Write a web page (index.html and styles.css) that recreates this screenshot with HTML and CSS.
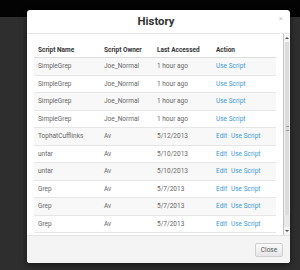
FILE: index.html
```html
<!DOCTYPE html>
<html>
<head>
<meta charset="utf-8">
<link rel="stylesheet" href="styles.css">
</head>
<body>
<div class="topbar"></div>
<div class="page"></div>
<div class="modal">
  <div class="modal-header">
    <h3 class="modal-title">History</h3>
    <span class="modal-x">×</span>
  </div>
  <div class="modal-body">
    <div class="body-content">
      <table class="table">
        <colgroup><col class="c1"><col class="c2"><col class="c3"><col class="c4"></colgroup>
        <thead>
          <tr><th>Script Name</th><th>Script Owner</th><th>Last Accessed</th><th>Action</th></tr>
        </thead>
        <tbody>
          <tr><td>SimpleGrep</td><td>Joe_Normal</td><td>1 hour ago</td><td><a class="link">Use Script</a></td></tr>
          <tr><td>SimpleGrep</td><td>Joe_Normal</td><td>1 hour ago</td><td><a class="link">Use Script</a></td></tr>
          <tr><td>SimpleGrep</td><td>Joe_Normal</td><td>1 hour ago</td><td><a class="link">Use Script</a></td></tr>
          <tr><td>SimpleGrep</td><td>Joe_Normal</td><td>1 hour ago</td><td><a class="link">Use Script</a></td></tr>
          <tr><td>TophatCufflinks</td><td>Av</td><td>5/12/2013</td><td><a class="link edit">Edit</a><a class="link">Use Script</a></td></tr>
          <tr><td>untar</td><td>Av</td><td>5/10/2013</td><td><a class="link edit">Edit</a><a class="link">Use Script</a></td></tr>
          <tr><td>untar</td><td>Av</td><td>5/10/2013</td><td><a class="link edit">Edit</a><a class="link">Use Script</a></td></tr>
          <tr><td>Grep</td><td>Av</td><td>5/7/2013</td><td><a class="link edit">Edit</a><a class="link">Use Script</a></td></tr>
          <tr><td>Grep</td><td>Av</td><td>5/7/2013</td><td><a class="link edit">Edit</a><a class="link">Use Script</a></td></tr>
          <tr><td>Grep</td><td>Av</td><td>5/7/2013</td><td><a class="link edit">Edit</a><a class="link">Use Script</a></td></tr>
        </tbody>
      </table>
    </div>
    <div class="sb">
      <div class="sb-btn"><span class="tri-up"></span></div>
      <div class="sb-track">
        <div class="sb-thumb"><span class="grip"></span></div>
      </div>
      <div class="sb-btn"><span class="tri-down"></span></div>
    </div>
  </div>
  <div class="modal-footer">
    <button class="btn">Close</button>
  </div>
</div>
</body>
</html>
```
FILE: styles.css
```css
html, body {
  margin: 0;
  padding: 0;
}
body {
  width: 300px;
  height: 270px;
  background: #2e2e2e;
  font-family: Roboto, "Liberation Sans", sans-serif;
  overflow: hidden;
  position: relative;
}
.topbar {
  height: 17px;
  background: #030303;
}
.page {
  height: 253px;
}
.modal {
  position: absolute;
  left: 27px;
  top: 10px;
  width: 263px;
  height: 253px;
  background: #fff;
  border-radius: 3px;
  box-shadow: 0 2px 6px rgba(0,0,0,0.5);
  display: flex;
  flex-direction: column;
  overflow: hidden;
}
.modal-header {
  height: 23px;
  flex: none;
  border-bottom: 1px solid #e8e8e8;
  display: flex;
  align-items: center;
  justify-content: center;
  position: relative;
}
.modal-title {
  margin: 0 5px 0 0;
  font-size: 11.4px;
  font-weight: 700;
  color: #333;
  line-height: 1;
}
.modal-x {
  position: absolute;
  right: 7px;
  top: 5px;
  font-size: 8px;
  color: #c8c8c8;
  line-height: 1;
}
.modal-body {
  height: 201px;
  flex: none;
  display: flex;
}
.body-content {
  flex: 1;
  overflow: hidden;
  padding: 8px 7px 0 7px;
}
.table {
  width: 242px;
  border-collapse: collapse;
  table-layout: fixed;
  font-size: 6.5px;
}
.c1 { width: 66px; }
.c2 { width: 53px; }
.c3 { width: 59px; }
.c4 { width: 64px; }
.table th {
  text-align: left;
  font-weight: 700;
  color: #333;
  height: 15px;
  padding: 0 0 0 4px;
  border-bottom: 1px solid #dddddd;
  vertical-align: middle;
  white-space: nowrap;
}
.table td {
  height: 16.5px;
  padding: 0 0 0 4px;
  color: #666;
  border-bottom: 1px solid #e6e6e6;
  vertical-align: middle;
  white-space: nowrap;
}
.table tbody tr:nth-child(odd) td {
  background: #f8f8f8;
}
.link {
  color: #3d9ad6;
}
.edit {
  margin-right: 4px;
}
.sb {
  width: 7px;
  flex: none;
  background: #e9e9e9;
  border-left: 1px solid #c4c4c4;
  display: flex;
  flex-direction: column;
  box-sizing: border-box;
}
.sb-btn {
  height: 8px;
  flex: none;
  display: flex;
  align-items: center;
  justify-content: center;
  background: #f4f4f4;
}
.tri-up {
  width: 0;
  height: 0;
  border-left: 2px solid transparent;
  border-right: 2px solid transparent;
  border-bottom: 2px solid #555;
}
.tri-down {
  width: 0;
  height: 0;
  border-left: 2px solid transparent;
  border-right: 2px solid transparent;
  border-top: 2px solid #555;
}
.sb-track {
  flex: 1;
  display: flex;
  flex-direction: column;
  padding: 0 0 10px 0;
}
.sb-thumb {
  height: 173px;
  background: #dcdcdc;
  border-left: 1px solid #f2f2f2;
  border-right: 1px solid #f2f2f2;
  display: flex;
  align-items: center;
  justify-content: center;
}
.grip {
  width: 3px;
  height: 3px;
  border-top: 1px solid #999;
  border-bottom: 1px solid #999;
}
.modal-footer {
  flex: 1;
  background: #f4f4f4;
  border-top: 1px solid #e4e4e4;
  display: flex;
  align-items: center;
  justify-content: flex-end;
  padding-right: 7px;
}
.btn {
  width: 28px;
  height: 14px;
  padding: 0;
  font-family: Roboto, "Liberation Sans", sans-serif;
  font-size: 6.5px;
  color: #555;
  background: linear-gradient(#fafafa, #e6e6e6);
  border: 1px solid #cfcfcf;
  border-radius: 2px;
}
```
